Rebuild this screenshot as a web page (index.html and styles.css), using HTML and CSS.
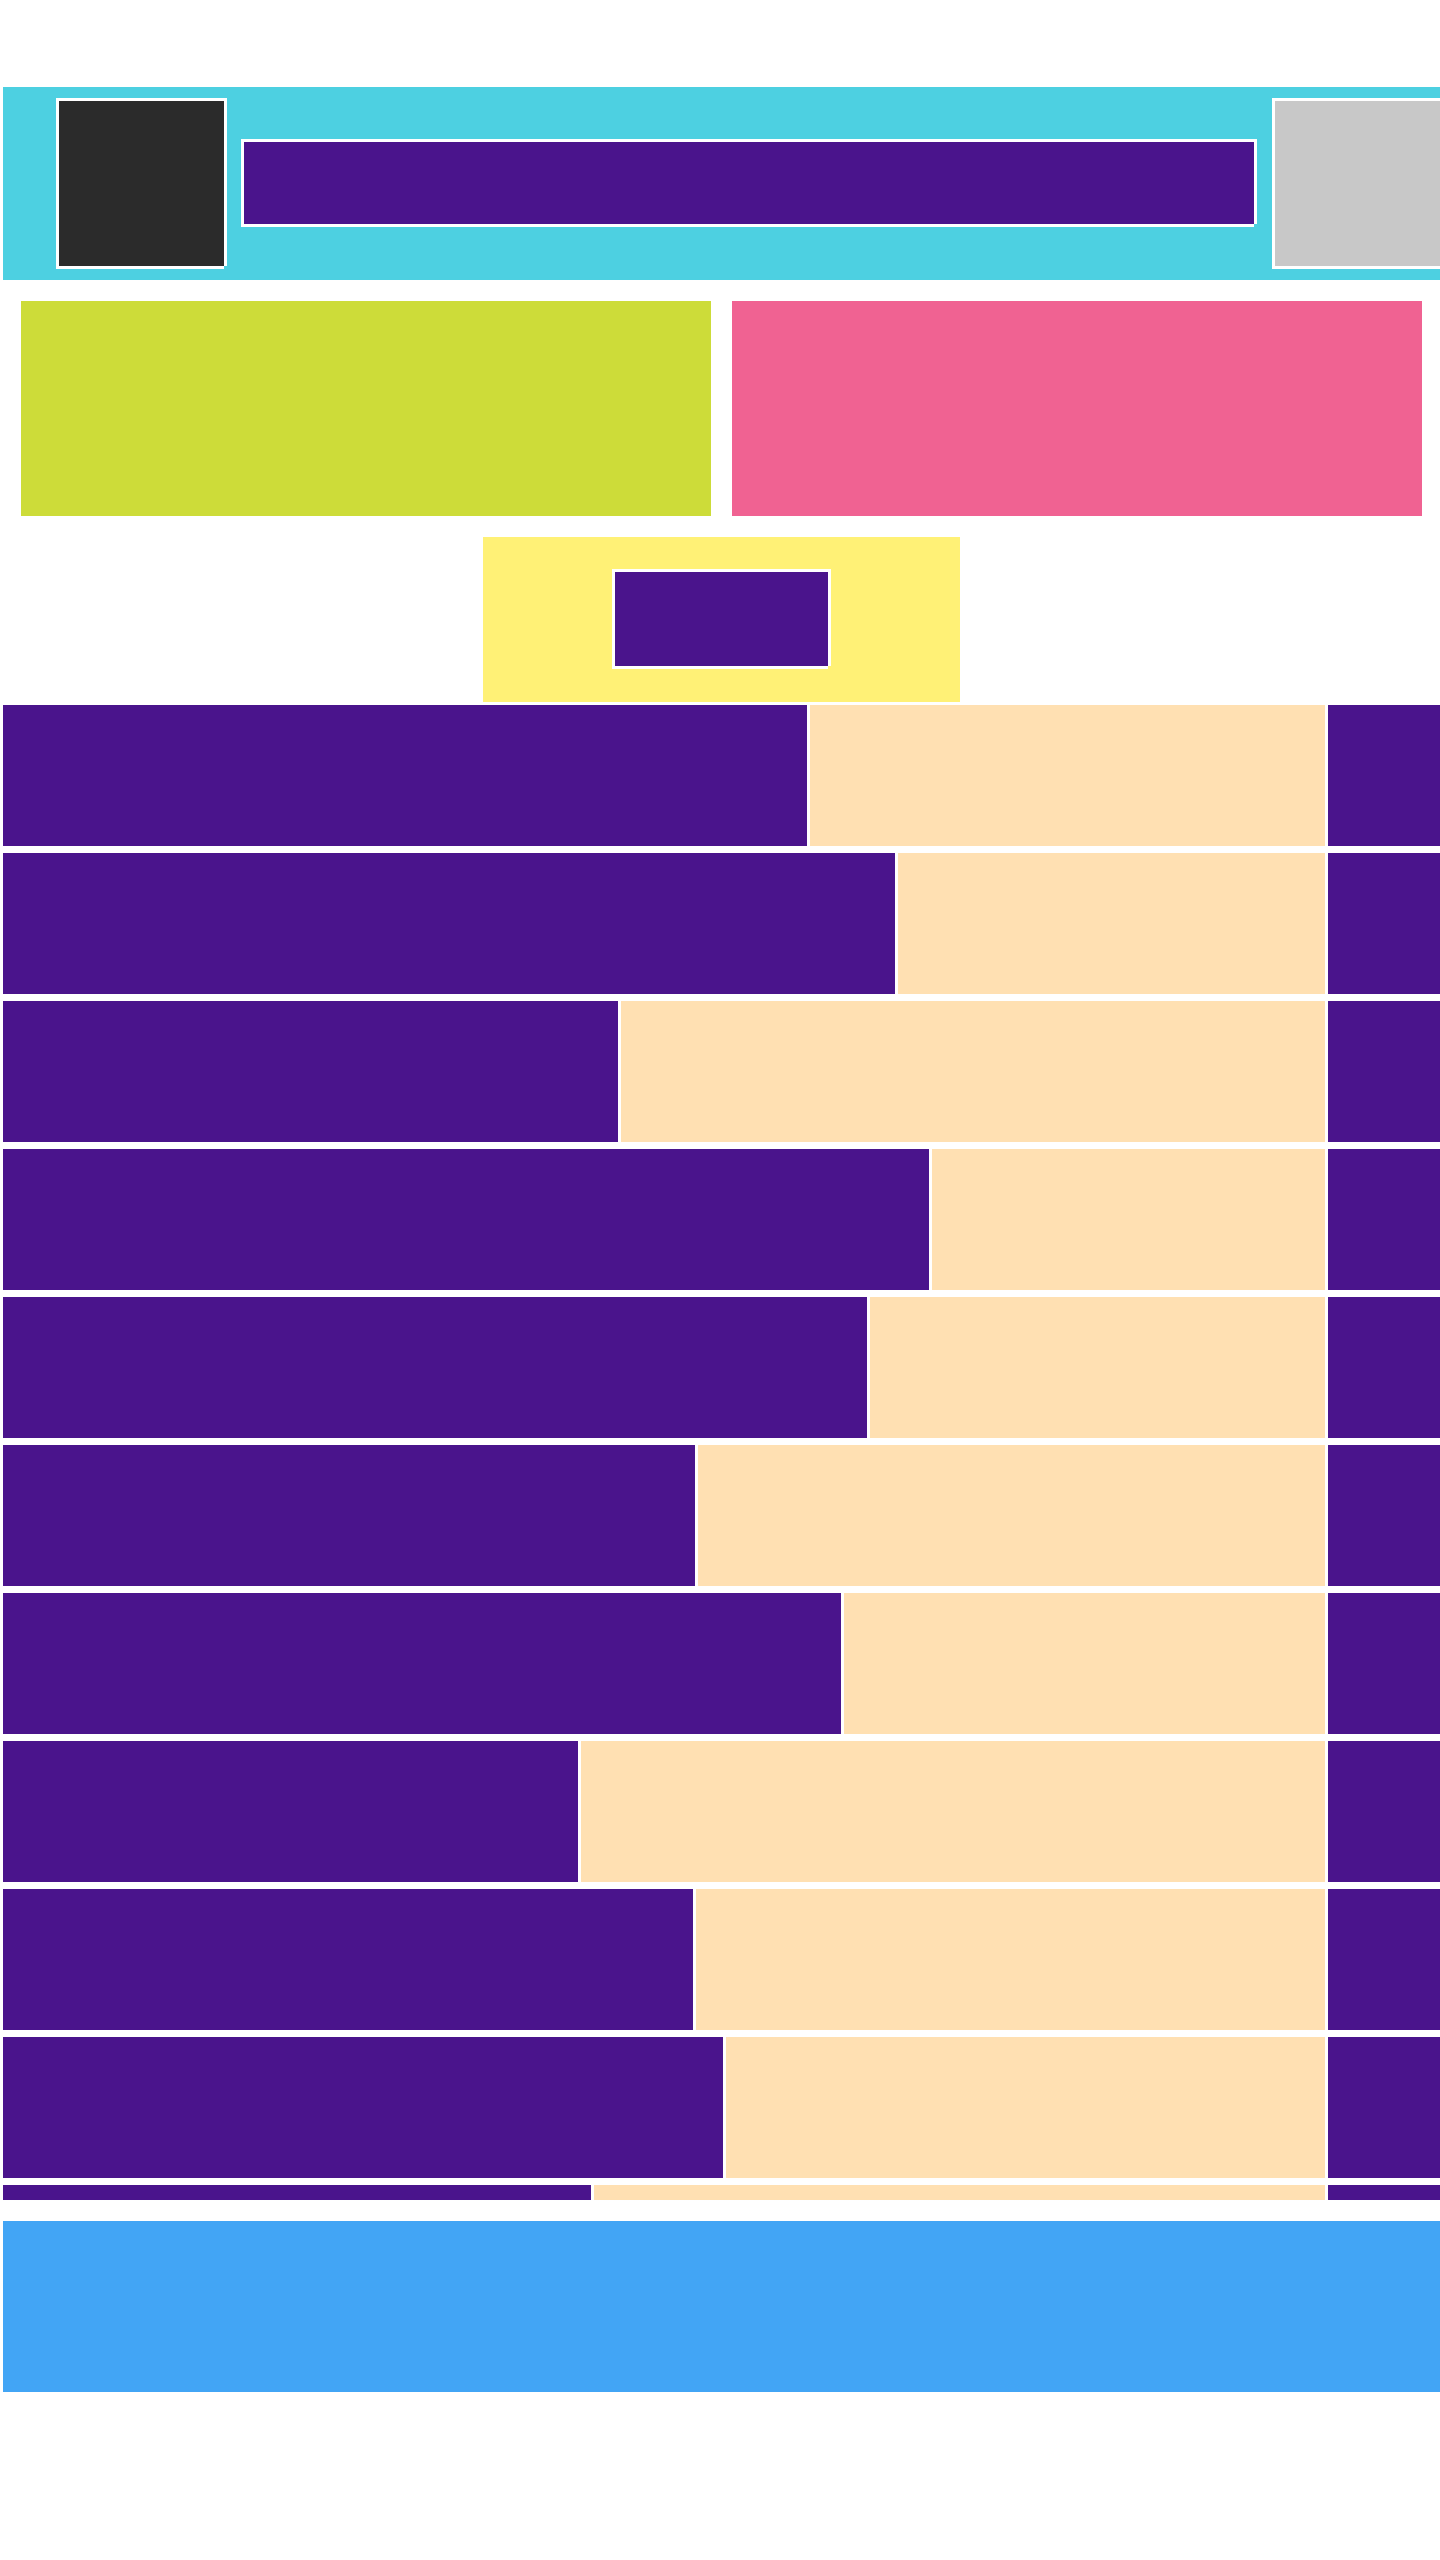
FILE: index.html
```html
<!DOCTYPE html>
<html lang="en">
<head>
  <meta charset="UTF-8" />
  <meta name="viewport" content="width=device-width, initial-scale=1.0"/>
  <title>Layout</title>
  <link rel="stylesheet" href="styles.css">
</head>
<body>
  <div class="page">
    <header class="topbar">
      <div class="logo framed"></div>
      <div class="search framed"></div>
      <div class="avatar framed"></div>
    </header>

    <div class="tiles">
      <div class="tile lime"></div>
      <div class="tile pink"></div>
    </div>

    <div class="promo">
      <div class="promo-btn framed"></div>
    </div>

    <ul class="rows">
      <li class="row"><span class="bar" style="width: 804px"></span><span class="fill"></span><span class="tail"></span></li>
      <li class="row"><span class="bar" style="width: 892px"></span><span class="fill"></span><span class="tail"></span></li>
      <li class="row"><span class="bar" style="width: 615px"></span><span class="fill"></span><span class="tail"></span></li>
      <li class="row"><span class="bar" style="width: 926px"></span><span class="fill"></span><span class="tail"></span></li>
      <li class="row"><span class="bar" style="width: 864px"></span><span class="fill"></span><span class="tail"></span></li>
      <li class="row"><span class="bar" style="width: 692px"></span><span class="fill"></span><span class="tail"></span></li>
      <li class="row"><span class="bar" style="width: 838px"></span><span class="fill"></span><span class="tail"></span></li>
      <li class="row"><span class="bar" style="width: 575px"></span><span class="fill"></span><span class="tail"></span></li>
      <li class="row"><span class="bar" style="width: 690px"></span><span class="fill"></span><span class="tail"></span></li>
      <li class="row"><span class="bar" style="width: 720px"></span><span class="fill"></span><span class="tail"></span></li>
      <li class="row"><span class="bar" style="width: 588px"></span><span class="fill"></span><span class="tail"></span></li>
    </ul>

    <footer class="footer"></footer>
  </div>
</body>
</html>
```

FILE: styles.css
```css
body {
  margin: 0;
  background: #fff;
  font-family: "Liberation Sans", Arial, sans-serif;
}
.page {
  margin-left: 3px;
  padding-top: 87px;
}

/* white frame around a block, open at the bottom-right corner */
.framed {
  box-shadow: -3px -3px 0 #fff, 3px -3px 0 #fff, -3px 3px 0 #fff, 3px 0 0 #fff, 0 3px 0 #fff;
}

.topbar {
  display: flex;
  align-items: center;
  height: 193px;
  box-sizing: border-box;
  padding: 14px 0 14px 56px;
  background: #4dd0e1;
}
.logo {
  flex: 0 0 165px;
  height: 165px;
  background: #2b2b2b;
}
.search {
  flex: 1;
  height: 82px;
  margin: 0 21px 1px 20px;
  background: #4a148c;
}
.avatar {
  flex: 0 0 165px;
  height: 165px;
  background: #c8c8c8;
}

.tiles {
  display: flex;
  gap: 21px;
  margin-top: 21px;
  padding: 0 18px;
}
.tile {
  flex: 1;
  height: 215px;
}
.lime { background: #cddc39; }
.pink { background: #f06292; }

.promo {
  display: flex;
  align-items: center;
  justify-content: center;
  width: 477px;
  height: 165px;
  margin: 21px auto 0;
  background: #fff176;
}
.promo-btn {
  width: 213px;
  height: 94px;
  margin-bottom: 1px;
  background: #4a148c;
}

.rows {
  list-style: none;
  margin: 3px 0 0;
  padding: 0;
  height: 1495px;
  overflow: hidden;
  display: flex;
  flex-direction: column;
  gap: 7px;
}
.row {
  display: flex;
  flex: 0 0 141px;
  gap: 3px;
}
.bar {
  flex: none;
  background: #4a148c;
}
.fill {
  flex: 1;
  background: #ffe0b2;
}
.tail {
  flex: 0 0 112px;
  background: #4a148c;
}

.footer {
  height: 171px;
  margin-top: 21px;
  background: #42a5f5;
}
```
